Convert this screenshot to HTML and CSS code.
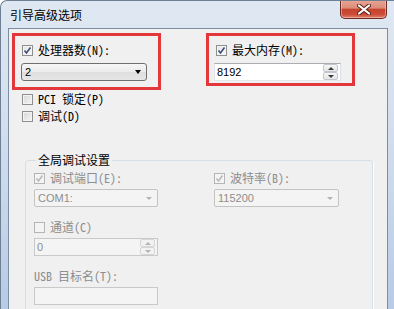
FILE: index.html
```html
<!DOCTYPE html>
<html lang="zh-CN">
<head>
  <meta charset="UTF-8">
  <title>引导高级选项</title>
  <link rel="stylesheet" href="styles.css">
</head>
<body>
  <div class="window">
    <div class="titlebar">
      <span class="title">引导高级选项</span>
      <button class="close" type="button">
        <svg width="14" height="11" viewBox="0 0 14 11">
          <path d="M2 1.5 L12 9.5 M12 1.5 L2 9.5" stroke="#5a2018" stroke-width="4" stroke-linecap="round"/>
          <path d="M2 1.5 L12 9.5 M12 1.5 L2 9.5" stroke="#fff" stroke-width="2.2" stroke-linecap="round"/>
        </svg>
      </button>
    </div>

    <div class="client">
      <!-- highlighted settings -->
      <div class="top-row">
        <div class="mark mark-cpu">
          <label class="check">
            <span class="cb checked"><svg width="9" height="9" viewBox="0 0 9 9"><path d="M1.5 4.5 L3.5 7 L7.5 1.5" fill="none" stroke="#3d4f7c" stroke-width="1.6"/></svg></span>
            <span class="txt">处理器数(N):</span>
          </label>
          <div class="combo"><span class="val">2</span><span class="arrow"></span></div>
        </div>
        <div class="mark mark-mem">
          <label class="check">
            <span class="cb checked"><svg width="9" height="9" viewBox="0 0 9 9"><path d="M1.5 4.5 L3.5 7 L7.5 1.5" fill="none" stroke="#3d4f7c" stroke-width="1.6"/></svg></span>
            <span class="txt">最大内存(M):</span>
          </label>
          <div class="spin">
            <span class="val">8192</span>
            <span class="spin-btns"><span class="up"></span><span class="down"></span></span>
          </div>
        </div>
      </div>

      <div class="options">
        <label class="check"><span class="cb"></span><span class="txt">PCI 锁定(P)</span></label>
        <label class="check"><span class="cb"></span><span class="txt">调试(D)</span></label>
      </div>

      <!-- global debug settings -->
      <fieldset class="group">
        <legend>全局调试设置</legend>
        <div class="group-grid">
          <div class="field">
            <label class="check disabled">
              <span class="cb checked"><svg width="9" height="9" viewBox="0 0 9 9"><path d="M1.5 4.5 L3.5 7 L7.5 1.5" fill="none" stroke="#b9b9b9" stroke-width="1.6"/></svg></span>
              <span class="txt">调试端口(E):</span>
            </label>
            <div class="combo disabled"><span class="val">COM1:</span><span class="arrow"></span></div>
          </div>
          <div class="field">
            <label class="check disabled">
              <span class="cb checked"><svg width="9" height="9" viewBox="0 0 9 9"><path d="M1.5 4.5 L3.5 7 L7.5 1.5" fill="none" stroke="#b9b9b9" stroke-width="1.6"/></svg></span>
              <span class="txt">波特率(B):</span>
            </label>
            <div class="combo disabled"><span class="val">115200</span><span class="arrow"></span></div>
          </div>
          <div class="field">
            <label class="check disabled"><span class="cb"></span><span class="txt">通道(C)</span></label>
            <div class="spin disabled">
              <span class="val">0</span>
              <span class="spin-btns"><span class="up"></span><span class="down"></span></span>
            </div>
          </div>
          <div class="field"></div>
          <div class="field">
            <div class="plain-label disabled"><span class="txt">USB 目标名(T):</span></div>
            <div class="textbox disabled"></div>
          </div>
        </div>
      </fieldset>
    </div>
  </div>
</body>
</html>
```

FILE: styles.css
```css
:root {
  --dialog: #f0f0f0;
  --mark: #e3383b;
  --frame-top: #dfe8f2;
  --frame-bottom: #b7cbe5;
  --disabled-text: #8d8d8d;
}

html, body {
  margin: 0;
  padding: 0;
}

body {
  width: 394px;
  height: 309px;
  overflow: hidden;
  font-family: "Noto Sans CJK SC", sans-serif;
  font-size: 12px;
  color: #000;
  background: #fff;
}

.window {
  width: 394px;
  height: 309px;
  box-sizing: border-box;
  border-top: 1px solid #6f7f94;
  border-left: 1px solid #6f7f94;
  border-radius: 7px 0 0 0;
  background: linear-gradient(var(--frame-top), #d3dfee 40%, var(--frame-bottom));
  display: flex;
  flex-direction: column;
  overflow: hidden;
}

.titlebar {
  height: 27px;
  flex: none;
  display: flex;
  align-items: flex-start;
  padding-left: 9px;
}

.title {
  margin-top: 6px;
  line-height: 16px;
  font-size: 12px;
}

.close {
  margin: -1px 7px 0 auto;
  width: 47px;
  height: 19px;
  padding: 0;
  border: 1px solid #6a2c24;
  border-top: none;
  border-radius: 0 0 5px 5px;
  background: linear-gradient(#e9a796 0%, #dc8c78 45%, #c7432f 52%, #cc4c37 80%, #e2826e 100%);
  box-shadow: inset 0 0 0 1px rgba(255, 210, 200, 0.5);
  display: flex;
  align-items: center;
  justify-content: center;
}

.client {
  flex: 1;
  margin: 0 6px 0 7px;
  border: 1px solid #7c8da3;
  border-bottom: none;
  background: var(--dialog);
  overflow: hidden;
}

/* red highlight boxes */
.top-row {
  display: flex;
  align-items: flex-start;
  padding: 4px 0 0 3px;
}

.mark {
  width: 149px;
  box-sizing: border-box;
  border: 3px solid var(--mark);
}

.mark-cpu {
  height: 57px;
  padding: 7px 0 0 6px;
}

.mark-cpu .check {
  margin-left: 1px;
}

.mark-mem {
  height: 53px;
  margin-left: 45px;
  padding: 7px 0 0 5px;
}

.mark-mem .check {
  margin-left: 2px;
}

.mark .combo,
.mark .spin {
  margin-top: 6px;
}

.mark .combo {
  width: 126px;
}

.mark .spin {
  width: 127px;
}

/* checkbox + label */
.check,
.plain-label {
  display: flex;
  align-items: center;
  height: 14px;
}

.txt {
  font-family: "Noto Sans Mono CJK SC", "Noto Sans CJK SC", sans-serif;
  font-size: 12px;
  line-height: 14px;
  white-space: pre;
}

.disabled .txt,
.disabled .val {
  color: var(--disabled-text);
}

.cb {
  width: 11px;
  height: 11px;
  box-sizing: border-box;
  margin-right: 5px;
  border: 1px solid #8e8f8f;
  background: linear-gradient(135deg, #d6d6d6, #f6f6f6);
  box-shadow: inset 0 0 0 1px #f4f4f4;
  display: flex;
  align-items: center;
  justify-content: center;
  flex: none;
}

.cb.checked {
  background: linear-gradient(135deg, #e4e4e4, #fbfbfb);
}

.disabled .cb {
  border-color: #b5b5b5;
  background: #f4f4f4;
  box-shadow: none;
}

/* drop-down list */
.combo {
  height: 18px;
  box-sizing: border-box;
  border: 1px solid #707070;
  border-radius: 3px;
  background: linear-gradient(#f6f6f6, #ebebeb 50%, #dfdfdf 52%, #e6e6e6);
  display: flex;
  align-items: center;
  justify-content: space-between;
  padding: 0 5px 0 3px;
}

.val {
  font-family: "Liberation Sans", Arial, sans-serif;
  font-size: 11px;
  line-height: 14px;
}

.arrow {
  width: 0;
  height: 0;
  border-left: 3.5px solid transparent;
  border-right: 3.5px solid transparent;
  border-top: 4px solid #000;
}

.combo.disabled {
  border-color: #c3c3c3;
  border-radius: 2px;
  background: #f4f4f4;
}

.combo.disabled .arrow {
  border-top-color: #b4b4b4;
  border-left-width: 3px;
  border-right-width: 3px;
  border-top-width: 3px;
}

/* numeric up-down */
.spin {
  height: 18px;
  box-sizing: border-box;
  border: 1px solid #abadb3;
  border-color: #abadb3 #dbdfe6 #e3e9ef #e2e3ea;
  background: #fff;
  display: flex;
  align-items: center;
  justify-content: space-between;
  padding-left: 2px;
}

.spin-btns {
  width: 15px;
  height: 16px;
  margin-right: 2px;
  display: flex;
  flex-direction: column;
}

.spin-btns span {
  flex: 1;
  box-sizing: border-box;
  border: 1px solid #c3c6cc;
  border-radius: 2px;
  background: linear-gradient(#f7f7f7, #e3e5e9);
  display: flex;
  align-items: center;
  justify-content: center;
}

.spin-btns .up::after,
.spin-btns .down::after {
  content: "";
  width: 0;
  height: 0;
  border-left: 3px solid transparent;
  border-right: 3px solid transparent;
}

.spin-btns .up::after {
  border-bottom: 3px solid #3a3a3a;
}

.spin-btns .down::after {
  border-top: 3px solid #3a3a3a;
}

.spin.disabled {
  border-color: #c9c9c9;
  background: #f4f4f4;
}

.spin.disabled .spin-btns span {
  border-color: #d6d6d6;
  background: #f2f2f2;
}

.spin.disabled .up::after {
  border-bottom-color: #b3b3b3;
}

.spin.disabled .down::after {
  border-top-color: #b3b3b3;
}

/* plain check rows */
.options {
  display: flex;
  flex-direction: column;
  gap: 3px;
  padding: 2px 0 0 13px;
}

/* group box */
.group {
  margin: 29px 0 0 16px;
  padding: 3px 0 0 8px;
  width: 348px;
  height: 200px;
  box-sizing: border-box;
  border: 1px solid #d5dfe5;
  border-radius: 3px;
  box-shadow: 1px 1px 0 #fff;
}

.group legend {
  margin-left: 2px;
  padding: 0 2px;
  line-height: 16px;
  font-size: 12px;
  background: var(--dialog);
}

.group-grid {
  display: grid;
  grid-template-columns: 124px 125px;
  column-gap: 56px;
  row-gap: 13px;
}

.field {
  display: flex;
  flex-direction: column;
  gap: 4px;
}

.textbox {
  height: 18px;
  box-sizing: border-box;
  border: 1px solid #c9c9c9;
  background: #f4f4f4;
}
```
